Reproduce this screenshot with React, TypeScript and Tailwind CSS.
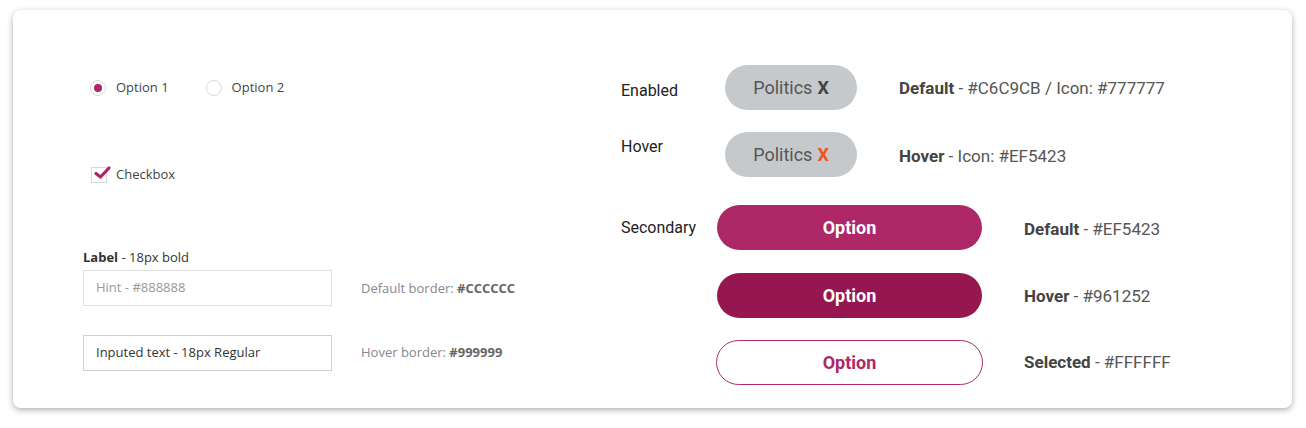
import React from "react";

const openSans = { fontFamily: '"Open Sans", "Noto Sans", sans-serif' };
const roboto = { fontFamily: 'Roboto, "Liberation Sans", sans-serif' };

function Radio({ checked, label }: { checked?: boolean; label: string }) {
  return (
    <div className="flex items-center h-5">
      <div className="w-4 h-4 rounded-full border border-[#d9d9d9] flex items-center justify-center bg-white">
        {checked && <div className="w-2 h-2 rounded-full bg-[#b0256a]" />}
      </div>
      <span className="ml-[10px] text-[13px] text-[#444]">{label}</span>
    </div>
  );
}

function Chip({ hover }: { hover?: boolean }) {
  return (
    <div className="w-[132px] h-[45px] rounded-full bg-[#c6c9cb] flex items-center justify-center text-[18px] text-[#555]">
      <span>Politics</span>
      <span className={"ml-[5px] font-bold " + (hover ? "text-[#ef5423]" : "text-[#444]")}>X</span>
    </div>
  );
}

export default function App() {
  return (
    <div className="w-[1306px] h-[428px] bg-white pt-[10px] pl-[13px]">
      <div className="w-[1279px] h-[398px] rounded-[8px] bg-white shadow-[0_2px_6px_rgba(0,0,0,0.32)] flex">
        {/* Left column */}
        <div className="w-[608px] pl-[70px] pt-[68px] flex flex-col" style={openSans}>
          <div className="flex items-center ml-[7px] gap-[37px]">
            <Radio checked label="Option 1" />
            <Radio label="Option 2" />
          </div>
          <div className="flex items-center h-5 mt-[67px] ml-[8px]">
            <div className="relative w-4 h-4 border border-[#d9d9d9] bg-white">
              <svg className="absolute left-[2px] top-[-2px]" width="17" height="14" viewBox="0 0 17 14">
                <path d="M2 7.5 L6.5 11 L15 2" fill="none" stroke="#b0256a" strokeWidth="3.2" strokeLinecap="round" strokeLinejoin="round" />
              </svg>
            </div>
            <span className="ml-[9px] text-[13px] text-[#444]">Checkbox</span>
          </div>
          <div className="mt-[63px] h-[18px] leading-[18px] text-[13px] text-[#333]">
            <span className="font-bold">Label</span> - 18px bold
          </div>
          <div className="mt-1 flex items-center">
            <div className="w-[249px] h-[36px] border border-[#e0e0e0] flex items-center pl-[12px] text-[13px] text-[#999]">
              Hint - #888888
            </div>
            <div className="ml-[29px] text-[13px] text-[#888] mt-[2px]">
              Default border: <span className="font-bold text-[#666]">#CCCCCC</span>
            </div>
          </div>
          <div className="mt-[29px] flex items-center">
            <div className="w-[249px] h-[36px] border border-[#d0d0d0] flex items-center pl-[12px] text-[13px] text-[#333]">
              Inputed text - 18px Regular
            </div>
            <div className="ml-[29px] text-[13px] text-[#888]">
              Hover border: <span className="font-bold text-[#666]">#999999</span>
            </div>
          </div>
        </div>

        {/* Right column */}
        <div className="flex-1 pt-[55px] flex flex-col" style={roboto}>
          <div className="flex items-center h-[45px]">
            <div className="w-[104px] text-[16px] text-[#222] mt-[7px]">Enabled</div>
            <Chip />
            <div className="ml-[42px] text-[17px] text-[#555] mt-[3px]">
              <span className="font-bold text-[#444]">Default</span> - #C6C9CB / Icon: #777777
            </div>
          </div>
          <div className="flex items-center h-[45px] mt-[22px]">
            <div className="w-[104px] text-[16px] text-[#222] mb-[15px]">Hover</div>
            <Chip hover />
            <div className="ml-[42px] text-[17px] text-[#555] mt-[5px]">
              <span className="font-bold text-[#444]">Hover</span> - Icon: #EF5423
            </div>
          </div>
          <div className="flex items-center h-[45px] mt-[28px]">
            <div className="w-[96px] text-[16px] text-[#222]">Secondary</div>
            <div className="w-[265px] h-[45px] rounded-full bg-[#ae2767] flex items-center justify-center text-[18px] font-bold text-white">
              Option
            </div>
            <div className="ml-[42px] text-[17px] text-[#555] mt-[5px]">
              <span className="font-bold text-[#444]">Default</span> - #EF5423
            </div>
          </div>
          <div className="flex items-center h-[45px] mt-[23px]">
            <div className="w-[96px]" />
            <div className="w-[265px] h-[45px] rounded-full bg-[#961650] flex items-center justify-center text-[18px] font-bold text-white">
              Option
            </div>
            <div className="ml-[42px] text-[17px] text-[#555] mt-[3px]">
              <span className="font-bold text-[#444]">Hover</span> - #961252
            </div>
          </div>
          <div className="flex items-center h-[45px] mt-[22px]">
            <div className="w-[96px]" />
            <div className="w-[267px] h-[45px] rounded-full bg-white border-[1.5px] border-[#b3286c] flex items-center justify-center text-[18px] font-bold text-[#ae2767] ml-[-1px]">
              Option
            </div>
            <div className="ml-[41px] text-[17px] text-[#555] mt-[1px]">
              <span className="font-bold text-[#444]">Selected</span> - #FFFFFF
            </div>
          </div>
        </div>
      </div>
    </div>
  );
}
